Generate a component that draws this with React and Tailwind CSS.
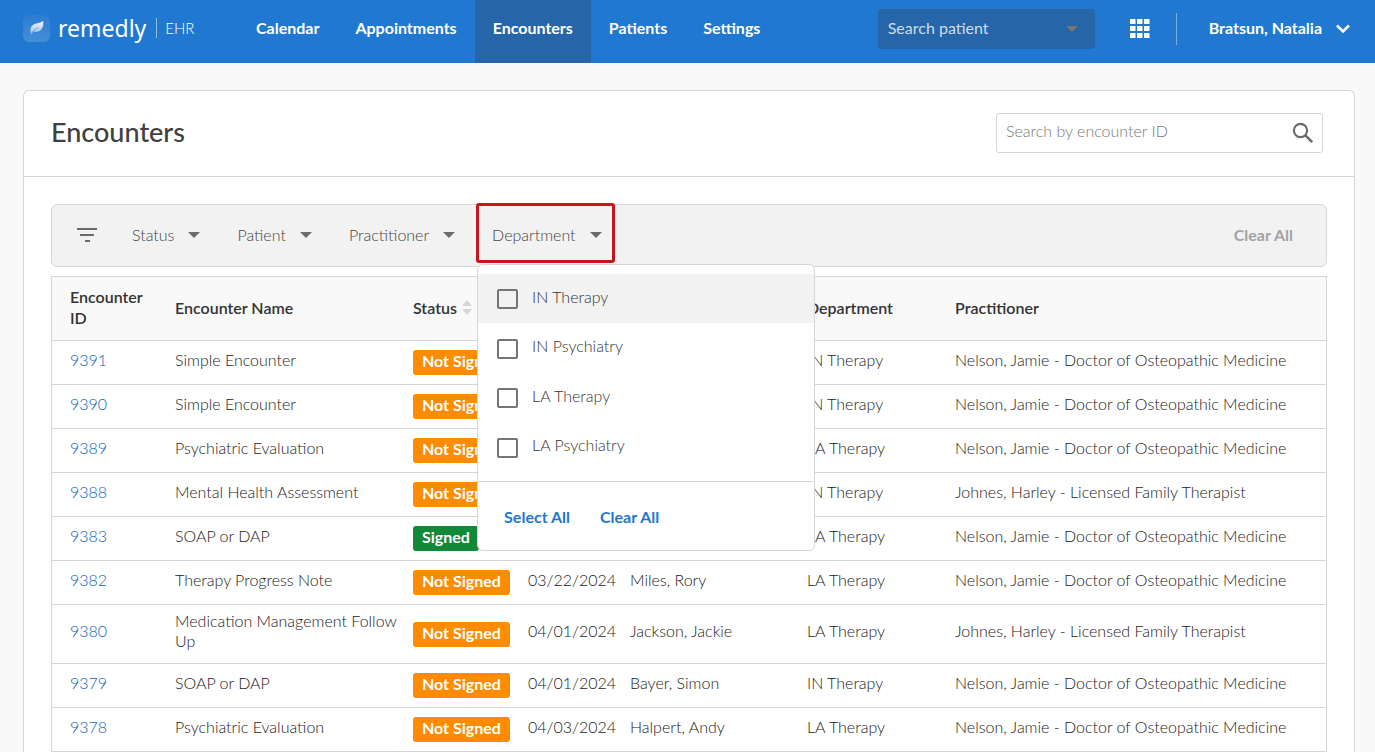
import React from "react";

const NAV = ["Calendar", "Appointments", "Encounters", "Patients", "Settings"];

const DOCTOR = "Nelson, Jamie - Doctor of Osteopathic Medicine";
const THERAPIST = "Johnes, Harley - Licensed Family Therapist";

const ROWS = [
  { id: "9391", name: "Simple Encounter", status: "Not Signed", date: "", patient: "", dept: "IN Therapy", who: DOCTOR },
  { id: "9390", name: "Simple Encounter", status: "Not Signed", date: "", patient: "", dept: "IN Therapy", who: DOCTOR },
  { id: "9389", name: "Psychiatric Evaluation", status: "Not Signed", date: "", patient: "", dept: "LA Therapy", who: DOCTOR },
  { id: "9388", name: "Mental Health Assessment", status: "Not Signed", date: "", patient: "", dept: "IN Therapy", who: THERAPIST },
  { id: "9383", name: "SOAP or DAP", status: "Signed", date: "", patient: "", dept: "LA Therapy", who: DOCTOR },
  { id: "9382", name: "Therapy Progress Note", status: "Not Signed", date: "03/22/2024", patient: "Miles, Rory", dept: "LA Therapy", who: DOCTOR },
  { id: "9380", name: "Medication Management Follow Up", status: "Not Signed", date: "04/01/2024", patient: "Jackson, Jackie", dept: "LA Therapy", who: THERAPIST },
  { id: "9379", name: "SOAP or DAP", status: "Not Signed", date: "04/01/2024", patient: "Bayer, Simon", dept: "IN Therapy", who: DOCTOR },
  { id: "9378", name: "Psychiatric Evaluation", status: "Not Signed", date: "04/03/2024", patient: "Halpert, Andy", dept: "LA Therapy", who: DOCTOR },
];

const DEPARTMENTS = ["IN Therapy", "IN Psychiatry", "LA Therapy", "LA Psychiatry"];

function Caret({ className }) {
  return (
    <svg viewBox="0 0 12 6" className={"h-[6px] w-3 shrink-0 " + className} fill="currentColor" aria-hidden="true">
      <path d="M0 0h12L6 6z" />
    </svg>
  );
}

function Logo() {
  return (
    <div className="flex items-center">
      <svg viewBox="0 0 27 27" className="size-[27px]" aria-hidden="true">
        <defs>
          <linearGradient id="tile" x1="0" y1="0" x2="0" y2="1">
            <stop offset="0" stopColor="#fff" stopOpacity="0.04" />
            <stop offset="1" stopColor="#fff" stopOpacity="0.17" />
          </linearGradient>
          <linearGradient id="leaf" x1="0" y1="0" x2="0" y2="1">
            <stop offset="0" stopColor="#fff" stopOpacity="0.95" />
            <stop offset="1" stopColor="#fff" stopOpacity="0.45" />
          </linearGradient>
        </defs>
        <rect width="27" height="27" rx="6" fill="url(#tile)" />
        <path d="M20.200 6C20.500 9 20.200 12 18.500 14.200C16.500 16.500 13 17.200 10.600 16.600C9.600 17.400 8.900 18.400 8.100 19.800C7.200 16.500 7 13 8.800 11C11.500 8 16.500 8.600 20.200 6z" fill="url(#leaf)" />
        <path d="M8.200 18.500C10 15.500 12.500 14 15.500 12.700" stroke="#4a90d9" strokeWidth="0.600" fill="none" />
      </svg>
      <span className="ml-2 font-['Noto_Sans'] text-[23px] leading-[30px] font-normal text-white">remedly</span>
      <span className="ml-[10px] h-5 w-px bg-white/50" />
      <span className="ml-2 font-['Lato'] text-[15px] text-white">EHR</span>
    </div>
  );
}

function Filter({ label, children }) {
  return (
    <div className="relative">
      <button type="button" className="flex h-[60px] items-center gap-[14px] text-[#444]">
        {label}
        <Caret className="text-[#6b6b6b]" />
      </button>
      {children}
    </div>
  );
}

function DepartmentMenu() {
  return (
    <>
      <span className="pointer-events-none absolute -top-[2px] -right-[13px] bottom-[2px] -left-4 z-20 rounded-[3px] border-3 border-[#c4161c]" />
      <div className="absolute top-[59px] -left-[15px] z-10 w-[338px] rounded-md border border-[#d6d6d6] bg-white pt-[9px]">
        <div className="mb-[9px]">
          {DEPARTMENTS.map((d) => (
            <label key={d} className="flex h-[50px] items-center gap-[14px] pl-[19px] text-[#333] odd:h-[49px] first:bg-[#f2f2f2]">
              <input type="checkbox" className="mt-px h-5 w-[21px] appearance-none rounded-xs border-2 border-[#757575] bg-transparent checked:bg-[#2078d0]" />
              <span className="pb-1">{d}</span>
            </label>
          ))}
        </div>
        <div className="flex h-[69px] items-center gap-[30px] border-t border-[#d6d6d6] pt-[2px] pl-[26px] font-bold text-[#2078d0]">
          <button type="button">Select All</button>
          <button type="button">Clear All</button>
        </div>
      </div>
    </>
  );
}

export default function App() {
  return (
    <div className="flex h-screen flex-col overflow-hidden bg-[#f9f9f9] font-['Lato',sans-serif] text-base leading-5 font-light text-[#1a1a1a]">
      <header className="flex h-[63px] shrink-0 items-stretch bg-[#2078d0] pr-[25px] pl-[23px] text-white">
        <div className="-mt-[7px] flex w-[215px] items-center">
          <Logo />
        </div>
        <nav className="flex items-stretch font-bold">
          {NAV.map((n) => (
            <a
              key={n}
              href="#"
              className={"flex items-center px-[18px] pb-2 " + (n === "Encounters" ? "bg-[#2565a8]" : "")}
            >
              {n}
            </a>
          ))}
        </nav>
        <div className="-mt-[5px] ml-auto flex items-center">
          <div className="relative">
            <select aria-label="Search patient" className="h-10 w-[217px] appearance-none rounded-sm bg-[#2565a8] px-[10px] pb-[3px] font-normal text-[#cddcec]">
              <option>Search patient</option>
            </select>
            <Caret className="pointer-events-none absolute top-[17px] right-[17px] text-[#757575]" />
          </div>
          <button type="button" aria-label="Apps" className="ml-[35px] pb-px">
            <svg viewBox="0 0 20 19" className="h-[19px] w-5" fill="#fff" aria-hidden="true">
              {[0, 7, 14].map((y) => [0, 7, 14].map((x) => <rect key={x + "-" + y} x={x} y={y} width="5.500" height="5" />))}
            </svg>
          </button>
          <span className="ml-[26px] h-8 w-px bg-white/40" />
          <button type="button" className="ml-8 flex items-center gap-[14px] pb-[3px] font-bold">
            Bratsun, Natalia
            <svg viewBox="0 0 14 10" className="mt-[2px] h-[10px] w-[14px]" fill="none" stroke="#fff" strokeWidth="2.600" aria-hidden="true">
              <path d="M1 1.500l6 6 6-6" />
            </svg>
          </button>
        </div>
      </header>

      <main className="mt-[27px] mr-5 ml-[23px] flex-1 overflow-hidden rounded-t-md border border-b-0 border-[#d6d6d6] bg-white">
        <div className="flex h-[86px] items-center justify-between border-b border-[#d6d6d6] pr-[31px] pb-[2px] pl-[27px]">
          <h1 className="pb-[2px] text-[27px] leading-8 font-medium text-[#404040]">Encounters</h1>
          <div className="relative">
            <input
              type="search"
              aria-label="Search by encounter ID"
              placeholder="Search by encounter ID"
              className="block h-10 w-[327px] rounded-[3px] border border-[#d6d6d6] bg-white px-[9px] pb-1 placeholder:text-[#777]"
            />
            <button type="button" aria-label="Search" className="absolute top-2 right-2">
              <svg viewBox="0 0 24 24" className="size-6" fill="none" stroke="#6b6b6b" aria-hidden="true">
                <circle cx="9.500" cy="9.500" r="6.600" strokeWidth="2.200" />
                <path d="M14.200 14.200l7 7" strokeWidth="2.600" />
              </svg>
            </button>
          </div>
        </div>

        <div className="px-[27px] pt-[27px]">
          <div className="flex h-[63px] items-start rounded-md border border-[#d6d6d6] bg-[#f2f2f2] pr-[33px] pl-[25px]">
            <div className="flex h-[60px] items-center">
              <svg viewBox="0 0 20 14" className="h-[14px] w-5" fill="#6b6b6b" aria-hidden="true">
                <path d="M0 0h20v2H0zM3 6h14v2H3zM8 12h5v2H8z" />
              </svg>
            </div>
            <div className="ml-[35px] flex gap-[37px]">
              <Filter label="Status" />
              <Filter label="Patient" />
              <Filter label="Practitioner" />
              <Filter label="Department">
                <DepartmentMenu />
              </Filter>
            </div>
            <button type="button" className="ml-auto h-[60px] font-bold text-[#a3a3a3]">
              Clear All
            </button>
          </div>

          <table className="mt-[9px] w-full table-fixed border-separate border-spacing-0 border border-b-0 border-[#d6d6d6] text-left">
            <colgroup>
              <col className="w-[114px]" />
              <col className="w-[238px]" />
              <col className="w-[115px]" />
              <col className="w-[102px]" />
              <col className="w-[177px]" />
              <col className="w-[148px]" />
              <col />
            </colgroup>
            <thead>
              <tr className="h-16 bg-[#f9f9f9] text-[#333] *:border-b *:border-[#d6d6d6] *:px-[9px] *:pb-[3px] *:leading-[21px] *:font-semibold">
                <th className="pr-5! pl-[18px]!">Encounter ID</th>
                <th>Encounter Name</th>
                <th>
                  <span className="flex items-center gap-[5px]">
                    Status
                    <svg viewBox="0 0 10 15" className="h-[15px] w-[10px] shrink-0" fill="#d6d6d6" aria-hidden="true">
                      <path d="M0 6l5-6 5 6zM0 9h10l-5 6z" />
                    </svg>
                  </span>
                </th>
                <th aria-label="Date" />
                <th aria-label="Patient" />
                <th>Department</th>
                <th>Practitioner</th>
              </tr>
            </thead>
            <tbody>
              {ROWS.map((r) => (
                <tr key={r.id} className="h-11 *:border-b *:border-[#d6d6d6] *:px-[9px] *:pt-[6px] *:pb-3">
                  <td className="pl-[18px]!">
                    <a href="#" className="text-[#0f66c0]">{r.id}</a>
                  </td>
                  <td className="pr-0!">{r.name}</td>
                  <td className="py-[9px]!">
                    <span
                      className={
                        "block h-[25px] w-fit rounded-[3px] px-[9px] leading-[22px] font-bold whitespace-nowrap text-white " +
                        (r.status === "Signed" ? "bg-[#118938]" : "bg-[#ff8c00]")
                      }
                    >
                      {r.status}
                    </span>
                  </td>
                  <td>{r.date}</td>
                  <td>{r.patient}</td>
                  <td>{r.dept}</td>
                  <td>{r.who}</td>
                </tr>
              ))}
            </tbody>
          </table>
        </div>
      </main>
    </div>
  );
}
